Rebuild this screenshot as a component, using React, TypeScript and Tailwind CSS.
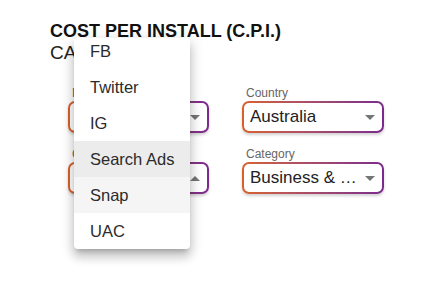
import { useState } from 'react'

const sources = ['FB', 'Twitter', 'IG', 'Search Ads', 'Snap', 'UAC']

function Arrow({ up = false }: { up?: boolean }) {
    return (
        <svg width="10" height="5" viewBox="0 0 10 5" className="shrink-0">
            <path d={up ? 'M0 5 L5 0 L10 5 Z' : 'M0 0 L5 5 L10 0 Z'} fill="#757575" />
        </svg>
    )
}

function SelectBox({ label, value, open = false }: { label: string; value: string; open?: boolean }) {
    return (
        <div className="flex flex-col">
            <span className="text-[12px] leading-[14px] text-[#666] pl-1 mb-[1px]">{label}</span>
            <div className="rounded-[7px] bg-gradient-to-r from-[#d8612a] to-[#7b2a8c] p-[2px] shadow-[0_2px_3px_rgba(0,0,0,0.18)]">
                <div className="h-[28px] rounded-[5px] bg-white flex items-center pl-[6px] pr-[7px] gap-2">
                    <span className="flex-1 truncate text-[17px] text-[#222]">{value}</span>
                    <Arrow up={open} />
                </div>
            </div>
        </div>
    )
}

export default function App() {
    const [hovered] = useState('Search Ads')
    const selected = 'Snap'

    return (
        <div className="relative w-[434px] h-[293px] bg-white font-['Liberation_Sans',Arial,sans-serif] overflow-hidden">
            <div className="pt-[21px] pl-[50px]">
                <h1 className="text-[18px] leading-[21px] font-bold text-[#111]">COST PER INSTALL (C.P.I.)</h1>
                <p className="text-[19px] leading-[22px] text-[#222]">CAMPAIGNS</p>
            </div>

            <div className="grid grid-cols-[141px_142px] gap-x-[33px] gap-y-[14px] pl-[68px] pt-[22px]">
                <SelectBox label="Network" value="Search Ads" />
                <SelectBox label="Country" value="Australia" />
                <SelectBox label="Channel" value="Snap" open />
                <SelectBox label="Category" value="Business & Finance" />
            </div>

            {/* open dropdown menu */}
            <div className="absolute left-[74px] top-[38px] w-[116px] h-[211px] bg-white rounded-[4px] overflow-hidden shadow-[0_5px_5px_-3px_rgba(0,0,0,0.2),0_8px_10px_1px_rgba(0,0,0,0.14),0_3px_14px_2px_rgba(0,0,0,0.12)]">
                <ul className="-mt-[5px]">
                    {sources.map(s => (
                        <li
                            key={s}
                            className={
                                'h-[36px] px-4 flex items-center whitespace-nowrap text-[16.5px] text-[#2b2b2b] ' +
                                (s === hovered ? 'bg-[#ececec]' : s === selected ? 'bg-[#f5f5f5]' : '')
                            }
                        >
                            {s}
                        </li>
                    ))}
                </ul>
            </div>
        </div>
    )
}
